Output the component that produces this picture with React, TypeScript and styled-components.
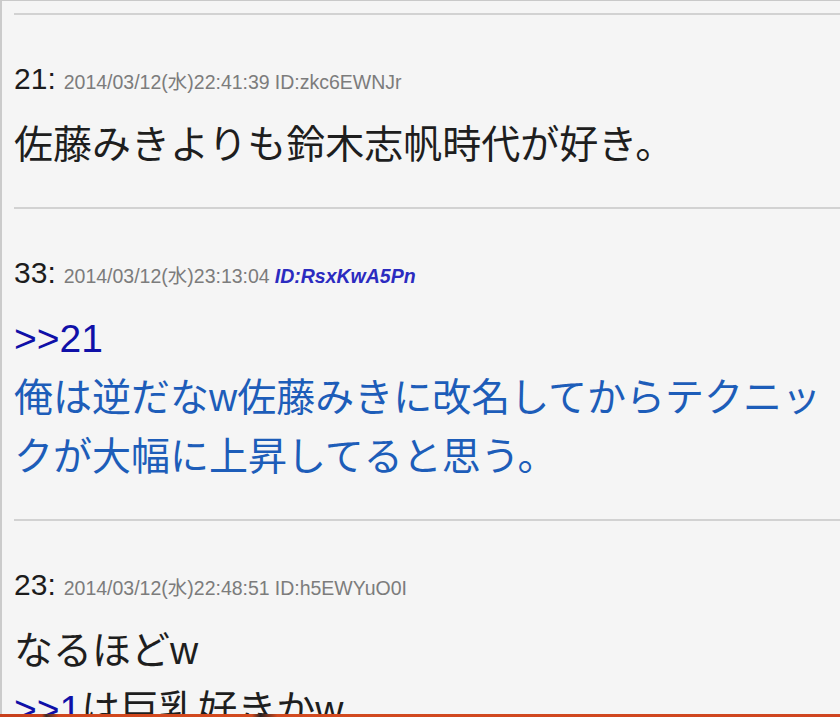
import styled, { createGlobalStyle } from 'styled-components';

const GlobalStyle = createGlobalStyle`
  html, body {
    margin: 0;
    padding: 0;
    background: #f5f5f5;
  }
`;

const Page = styled.div`
  min-height: 100vh;
  box-sizing: border-box;
  background: #f5f5f5;
  border-top: 1px solid #c9c9c9;
  border-left: 2px solid #cbcbcb;
  padding: 12px 0 0 12px;
  overflow: hidden;
  font-family: "Noto Sans CJK JP", sans-serif;
`;

const Post = styled.article`
  border-top: 2px solid #d2d2d2;
  padding: 46px 0 33px;
`;

const Header = styled.div`
  display: flex;
  align-items: baseline;
  height: 36px;
  line-height: 36px;
  white-space: nowrap;
  font-family: "Liberation Sans", "Noto Sans CJK JP", sans-serif;
`;

const Number = styled.span`
  font-size: 30px;
  color: #1c1c1c;
  margin-right: 8px;
`;

const Meta = styled.span`
  font-size: 19.5px;
  color: #7c7c7c;
`;

const Id = styled.span<{ $hot?: boolean }>`
  margin-left: 5px;
  color: ${({ $hot }) => ($hot ? '#2b2bc0' : '#7c7c7c')};
  font-weight: ${({ $hot }) => ($hot ? 700 : 400)};
  font-style: ${({ $hot }) => ($hot ? 'italic' : 'normal')};
`;

const Body = styled.div<{ $reply?: boolean }>`
  margin-top: 18px;
  font-size: 39px;
  line-height: 59px;
  color: ${({ $reply }) => ($reply ? '#1d5db9' : '#1e1e1e')};
  font-family: "Liberation Sans", "Noto Sans CJK JP", sans-serif;
  line-break: strict;
`;

const Anchor = styled.span`
  color: #1010a8;
`;

const BottomBar = styled.div`
  position: fixed;
  left: 0;
  right: 0;
  bottom: 0;
  height: 3px;
  background: linear-gradient(
    90deg,
    #c8401c 0%,
    #c8401c 5%,
    #3a2a28 5.5%,
    #d0461d 7%,
    #d24a1f 30%,
    #2a2020 31%,
    #d24a1f 33%,
    #cf4520 100%
  );
`;

type Item = {
  num: number;
  date: string;
  id: string;
  hot?: boolean;
  reply?: boolean;
  lines: { anchor?: string; text: string }[];
};

const posts: Item[] = [
  {
    num: 21,
    date: '2014/03/12(水)22:41:39',
    id: 'ID:zkc6EWNJr',
    lines: [{ text: '佐藤みきよりも鈴木志帆時代が好き。' }],
  },
  {
    num: 33,
    date: '2014/03/12(水)23:13:04',
    id: 'ID:RsxKwA5Pn',
    hot: true,
    reply: true,
    lines: [
      { anchor: '>>21', text: '' },
      { text: '俺は逆だなw佐藤みきに改名してからテクニックが大幅に上昇してると思う。' },
    ],
  },
  {
    num: 23,
    date: '2014/03/12(水)22:48:51',
    id: 'ID:h5EWYuO0I',
    lines: [{ text: 'なるほどw' }, { anchor: '>>1', text: 'は巨乳好きかw' }],
  },
];

export default function App() {
  return (
    <>
      <GlobalStyle />
      <Page>
        {posts.map((p) => (
          <Post key={p.num}>
            <Header>
              <Number>{p.num}:</Number>
              <Meta>
                {p.date}
                <Id $hot={p.hot}>{p.id}</Id>
              </Meta>
            </Header>
            <Body $reply={p.reply}>
              {p.lines.map((l, i) => (
                <div key={i}>
                  {l.anchor && <Anchor>{l.anchor}</Anchor>}
                  {l.text}
                </div>
              ))}
            </Body>
          </Post>
        ))}
      </Page>
      <BottomBar />
    </>
  );
}
